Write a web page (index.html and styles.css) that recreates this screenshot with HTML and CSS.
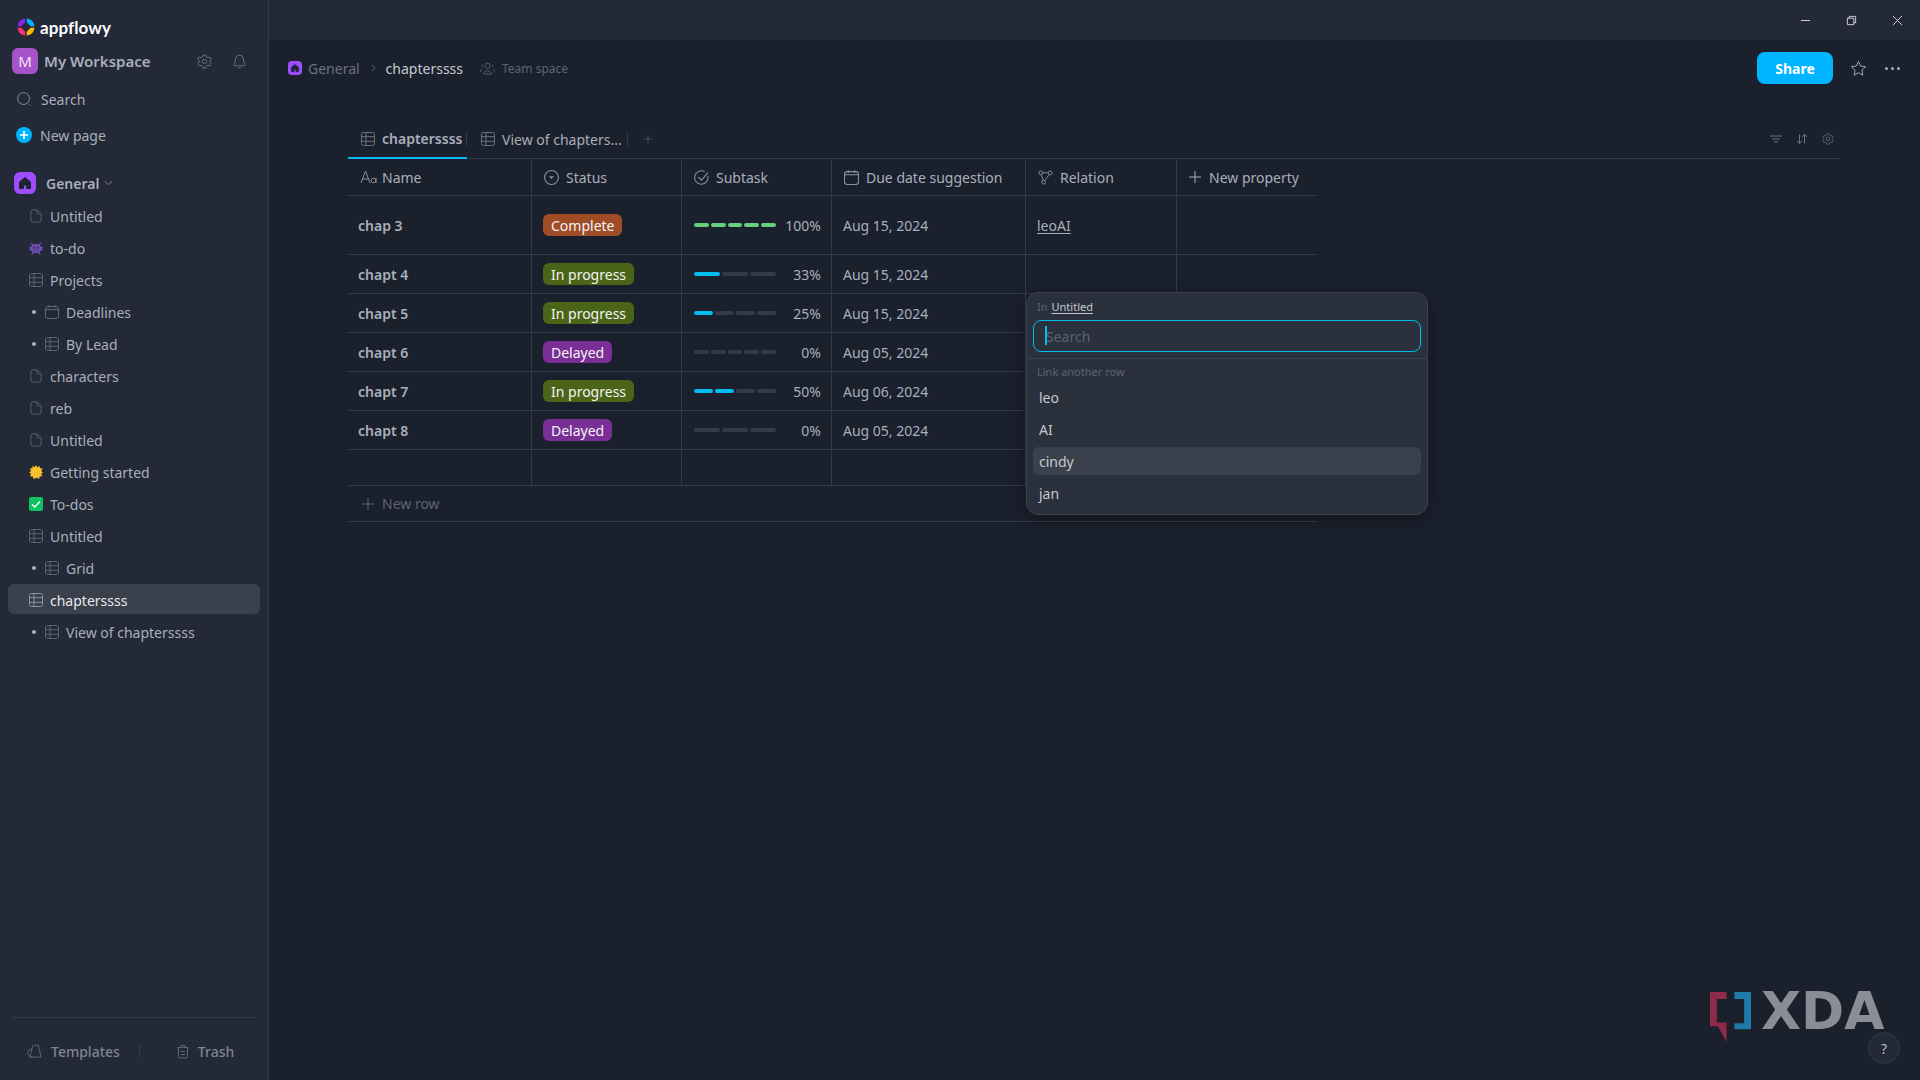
FILE: index.html
```html
<!DOCTYPE html>
<html lang="en">
<head>
<meta charset="utf-8">
<title>AppFlowy</title>
<link rel="stylesheet" href="styles.css">
</head>
<body>
<svg class="defs" width="0" height="0" aria-hidden="true">
  <symbol id="i-doc" viewBox="0 0 14 16"><path d="M3 1h5.2L13 5.8V12.5A2.5 2.5 0 0 1 10.500 15h-7A2.500 2.500 0 0 1 1 12.500v-9A2.500 2.500 0 0 1 3 1zM8.200 1v2.800a2 2 0 0 0 2 2H13" fill="none" stroke="currentColor" stroke-width="1"/></symbol>
  <symbol id="i-grid" viewBox="0 0 14 14"><g fill="none" stroke="currentColor" stroke-width="1"><rect x=".5" y=".5" width="13" height="13" rx="2"/><path d="M.5 4.700h13M.5 9.300h13M5 .5v13"/></g></symbol>
  <symbol id="i-cal" viewBox="0 0 14 14"><g fill="none" stroke="currentColor" stroke-width="1"><rect x=".5" y="1.500" width="13" height="12" rx="2.500"/><path d="M.5 4.500h13M4 .2v2.500M10 .2v2.500"/></g></symbol>
  <symbol id="i-home" viewBox="0 0 22 22"><rect width="22" height="22" rx="6" fill="#9b4dff"/><path d="M11 5.500 5.500 10v6.500h4V13h3v3.500h4V10z" fill="#1f2430" stroke="#1f2430" stroke-linejoin="round"/></symbol>
  <symbol id="i-gear" viewBox="0 0 16 16"><g fill="none" stroke="currentColor" stroke-width="1"><path d="M6.500 1h3l.5 2 1.600.9 2-.6 1.500 2.600-1.500 1.400v1.400l1.500 1.400-1.500 2.600-2-.6-1.600.9-.5 2h-3l-.5-2-1.600-.9-2 .6L.9 10.100l1.500-1.400V7.300L.9 5.900l1.500-2.600 2 .6L6 3z" stroke-linejoin="round"/><circle cx="8" cy="8" r="2.300"/></g></symbol>
  <symbol id="i-plus" viewBox="0 0 12 12"><path d="M6 0v12M0 6h12" fill="none" stroke="currentColor" stroke-width="1"/></symbol>
</svg>

<div class="app">
  <aside class="sidebar">
    <div class="brand">
      <svg class="brand-mark" viewBox="0 0 18 18"><path d="M8.300.6C4 .8.800 4 .6 8.300h3.700l4-4z" fill="#8427e0"/><path d="M9.700.6c4.300.2 7.500 3.400 7.700 7.700h-3.700l-4-4z" fill="#00b5ff"/><path d="M17.400 9.700c-.2 4.300-3.400 7.500-7.700 7.700v-3.700l4-4z" fill="#ffbd00"/><path d="M.6 9.700c.2 4.300 3.400 7.500 7.700 7.700v-3.700l-4-4z" fill="#f7317f"/></svg>
      <span class="brand-name">appflowy</span>
    </div>
    <div class="workspace">
      <span class="avatar">M</span>
      <span class="workspace-name">My Workspace</span>
      <svg class="ws-gear" viewBox="0 0 16 16"><use href="#i-gear"/></svg>
      <svg class="ws-bell" viewBox="0 0 14 16"><path d="M7 1.200A4.300 4.300 0 0 0 2.700 5.500c0 4-1.700 5.500-1.700 6.500 0 .4.300.6.700.6h10.600c.4 0 .7-.2.700-.6 0-1-1.700-2.500-1.700-6.500A4.300 4.300 0 0 0 7 1.200zM5.500 14.300c.8.800 2.200.8 3 0" fill="none" stroke="currentColor"/></svg>
    </div>
    <div class="nav-row nav-search">
      <svg class="nav-icon" viewBox="0 0 16 16"><circle cx="7" cy="7" r="6.300" fill="none" stroke="currentColor"/><path d="m12.800 13 1.400 1.400" stroke="currentColor"/></svg>
      <span>Search</span>
    </div>
    <div class="nav-row nav-new">
      <svg class="nav-plus" viewBox="0 0 16 16"><circle cx="8" cy="8" r="8" fill="#00b5ff"/><path d="M8 4v8M4 8h8" stroke="#fff" stroke-width="1.600"/></svg>
      <span>New page</span>
    </div>
    <div class="space-row">
      <svg class="space-icon"><use href="#i-home"/></svg>
      <span class="space-name">General</span>
      <svg class="chev" viewBox="0 0 10 6"><path d="m1 1 4 4 4-4" fill="none" stroke="currentColor"/></svg>
    </div>
    <ul class="tree">
      <li class="item"><svg class="ico"><use href="#i-doc"/></svg>Untitled</li>
      <li class="item"><svg class="ico" viewBox="0 0 14 14"><path d="M2 1l2 2h6l2-2 .5 1.500L11 4v1h1.500L14 7.500 12.500 10H11v2l1 1.500h-2L9 12H5l-1 1.500H2L3 12v-2H1.500L0 7.500 1.500 5H3V4L1.500 2.500z" fill="#6a4aa8"/><path d="M4.500 6h1.500v1.500H4.500zM8 6h1.500v1.500H8z" fill="#232936"/></svg>to-do</li>
      <li class="item"><svg class="ico"><use href="#i-grid"/></svg>Projects</li>
      <li class="item sub"><span class="dot"></span><svg class="ico"><use href="#i-cal"/></svg>Deadlines</li>
      <li class="item sub"><span class="dot"></span><svg class="ico"><use href="#i-grid"/></svg>By Lead</li>
      <li class="item"><svg class="ico"><use href="#i-doc"/></svg>characters</li>
      <li class="item"><svg class="ico"><use href="#i-doc"/></svg>reb</li>
      <li class="item"><svg class="ico"><use href="#i-doc"/></svg>Untitled</li>
      <li class="item"><svg class="ico" viewBox="0 0 14 14"><path d="M7 0l1.200 2.300L10.700.9l.2 2.400 2.700.3-1.300 2.300L14 7.500l-1.700 1.300.9 2.500-2.600.2-.4 2.500-2.200-1.300L4.500 14l-.6-2.500-2.800-.1.900-2.600L0 7.500l2-1.600L.7 3.500l2.700-.2.300-2.500 2.200 1.400z" fill="#fbc02d"/></svg>Getting started</li>
      <li class="item"><svg class="ico" viewBox="0 0 14 14"><rect width="14" height="14" rx="2" fill="#0bc45f"/><path d="m3 7.500 2.800 2.500L11 4.500" fill="none" stroke="#fff" stroke-width="1.500"/></svg>To-dos</li>
      <li class="item"><svg class="ico"><use href="#i-grid"/></svg>Untitled</li>
      <li class="item sub"><span class="dot"></span><svg class="ico"><use href="#i-grid"/></svg>Grid</li>
      <li class="item active"><svg class="ico"><use href="#i-grid"/></svg>chapterssss</li>
      <li class="item sub"><span class="dot"></span><svg class="ico"><use href="#i-grid"/></svg>View of chapterssss</li>
    </ul>
    <div class="side-foot">
      <div class="foot-btn foot-templates">
        <svg class="foot-ico" viewBox="0 0 16 16"><path d="M5.500 5.500a4 4 0 1 0 1 7.500M6 2l6-1 3 13H3z" fill="none" stroke="currentColor" stroke-linejoin="round"/></svg>
        <span>Templates</span>
      </div>
      <span class="foot-sep"></span>
      <div class="foot-btn foot-trash">
        <svg class="foot-ico trash" viewBox="0 0 12 14"><path d="M.5 3h11M4 3V1h4v2M1.500 3v9a1.500 1.500 0 0 0 1.500 1.500h6a1.500 1.500 0 0 0 1.500-1.500V3M4 7h4M4 10h4" fill="none" stroke="currentColor"/></svg>
        <span>Trash</span>
      </div>
    </div>
  </aside>

  <main class="main">
    <div class="titlebar">
      <svg class="win" viewBox="0 0 12 12"><path d="M1 6h10" stroke="currentColor" fill="none"/></svg>
      <svg class="win" viewBox="0 0 12 12"><path d="M1.500 3.500h7v7h-7zM3.500 3.500v-2h7v7h-2" stroke="currentColor" fill="none"/></svg>
      <svg class="win" viewBox="0 0 12 12"><path d="m1 1 10 10M11 1 1 11" stroke="currentColor" fill="none"/></svg>
    </div>
    <div class="crumbs">
      <svg class="crumb-home" viewBox="0 0 22 22"><use href="#i-home"/></svg>
      <span class="crumb-general">General</span>
      <svg class="crumb-chev" viewBox="0 0 6 10"><path d="m1 1 4 4-4 4" fill="none" stroke="currentColor"/></svg>
      <span class="crumb-page">chapterssss</span>
      <svg class="crumb-team" viewBox="0 0 16 14"><g fill="none" stroke="currentColor"><circle cx="8" cy="4" r="2.800"/><path d="M4 13c0-2.500 1.500-3.500 4-3.500s4 1 4 3.500zM3 2.500C1.800 3 1.800 5 3 5.500M13 2.500c1.200.5 1.200 2.500 0 3M1 11c-1-1.500-.5-2.500 1-3M15 11c1-1.500.5-2.500-1-3"/></g></svg>
      <span class="crumb-team-label">Team space</span>
      <span class="share">Share</span>
      <svg class="star" viewBox="0 0 18 18"><path d="m9 1.500 2.300 4.900 5.200.7-3.800 3.700.9 5.300L9 13.500l-4.600 2.600.9-5.300-3.800-3.700 5.200-.7z" fill="none" stroke="currentColor" stroke-linejoin="round"/></svg>
      <span class="more"><i></i><i></i><i></i></span>
    </div>

    <section class="board">
      <div class="tabs">
        <div class="tab tab-on"><svg class="ico"><use href="#i-grid"/></svg><span>chapterssss</span></div>
        <div class="tab tab-view"><svg class="ico"><use href="#i-grid"/></svg><span>View of chapters...</span></div>
        <svg class="tab-add" viewBox="0 0 12 12"><use href="#i-plus"/></svg>
        <div class="tools">
          <svg class="tool" viewBox="0 0 12 8"><path d="M0 1h12M2 4h8M4 7h4" stroke="currentColor" fill="none"/></svg>
          <svg class="tool" viewBox="0 0 12 12"><path d="M3.500 1.500v9M1 8l2.500 2.700L6 8M8.500 10.500v-9M6 4l2.500-2.700L11 4" stroke="currentColor" fill="none"/></svg>
          <svg class="tool" viewBox="0 0 16 16"><use href="#i-gear"/></svg>
        </div>
      </div>

      <div class="table">
        <div class="row head">
          <div class="hcell"><svg class="hico" viewBox="0 0 16 14"><path d="M.5 13 5 1l4.500 12M2 9h6" fill="none" stroke="currentColor"/><circle cx="13" cy="10.500" r="2.300" fill="none" stroke="currentColor"/><path d="M15.500 8v5" stroke="currentColor"/></svg>Name</div>
          <div class="hcell"><svg class="hico" viewBox="0 0 14 14"><circle cx="7" cy="7" r="6.500" fill="none" stroke="currentColor"/><path d="M4.500 5.800h5L7 8.500z" fill="currentColor"/></svg>Status</div>
          <div class="hcell"><svg class="hico" viewBox="0 0 14 14"><path d="M13 5.500A6.300 6.300 0 1 1 10 1.500M4 6.500l3 3L13 2.500" fill="none" stroke="currentColor"/></svg>Subtask</div>
          <div class="hcell"><svg class="hico" viewBox="0 0 14 14"><use href="#i-cal"/></svg>Due date suggestion</div>
          <div class="hcell"><svg class="hico" viewBox="0 0 16 16"><g fill="none" stroke="currentColor"><circle cx="3" cy="3" r="2"/><circle cx="13" cy="3" r="2"/><circle cx="6" cy="13" r="2"/><path d="M5 3h6M3.500 5l2 6M12 5l-5 6.500"/></g></svg>Relation</div>
          <div class="hcell hcell-new"><svg class="hplus" viewBox="0 0 12 12"><use href="#i-plus"/></svg>New property</div>
        </div>

        <div class="row first">
          <div class="cell name">chap 3</div>
          <div class="cell"><span class="tag tag-complete">Complete</span></div>
          <div class="cell prog"><span class="bar"><i class="seg green"></i><i class="seg green"></i><i class="seg green"></i><i class="seg green"></i><i class="seg green"></i></span><span class="pct">100%</span></div>
          <div class="cell">Aug 15, 2024</div>
          <div class="cell rel"><u>leo</u> <u>AI</u></div>
          <div class="cell last"></div>
        </div>
        <div class="row">
          <div class="cell name">chapt 4</div>
          <div class="cell"><span class="tag tag-progress">In progress</span></div>
          <div class="cell prog"><span class="bar"><i class="seg blue"></i><i class="seg"></i><i class="seg"></i></span><span class="pct">33%</span></div>
          <div class="cell">Aug 15, 2024</div>
          <div class="cell"></div>
          <div class="cell last"></div>
        </div>
        <div class="row">
          <div class="cell name">chapt 5</div>
          <div class="cell"><span class="tag tag-progress">In progress</span></div>
          <div class="cell prog"><span class="bar"><i class="seg blue"></i><i class="seg"></i><i class="seg"></i><i class="seg"></i></span><span class="pct">25%</span></div>
          <div class="cell">Aug 15, 2024</div>
          <div class="cell"></div>
          <div class="cell last"></div>
        </div>
        <div class="row">
          <div class="cell name">chapt 6</div>
          <div class="cell"><span class="tag tag-delayed">Delayed</span></div>
          <div class="cell prog"><span class="bar"><i class="seg"></i><i class="seg"></i><i class="seg"></i><i class="seg"></i><i class="seg"></i></span><span class="pct">0%</span></div>
          <div class="cell">Aug 05, 2024</div>
          <div class="cell"></div>
          <div class="cell last"></div>
        </div>
        <div class="row">
          <div class="cell name">chapt 7</div>
          <div class="cell"><span class="tag tag-progress">In progress</span></div>
          <div class="cell prog"><span class="bar"><i class="seg blue"></i><i class="seg blue"></i><i class="seg"></i><i class="seg"></i></span><span class="pct">50%</span></div>
          <div class="cell">Aug 06, 2024</div>
          <div class="cell"></div>
          <div class="cell last"></div>
        </div>
        <div class="row">
          <div class="cell name">chapt 8</div>
          <div class="cell"><span class="tag tag-delayed">Delayed</span></div>
          <div class="cell prog"><span class="bar"><i class="seg"></i><i class="seg"></i><i class="seg"></i></span><span class="pct">0%</span></div>
          <div class="cell">Aug 05, 2024</div>
          <div class="cell"></div>
          <div class="cell last"></div>
        </div>
        <div class="row empty">
          <div class="cell"></div><div class="cell"></div><div class="cell"></div><div class="cell"></div><div class="cell"></div><div class="cell last"></div>
        </div>
        <div class="new-row"><svg class="hplus" viewBox="0 0 12 12"><use href="#i-plus"/></svg>New row</div>
      </div>
    </section>
  </main>

  <div class="popup">
    <div class="pop-head"><span class="pop-in">In</span> <u>Untitled</u></div>
    <div class="pop-search"><i class="caret"></i><span>Search</span></div>
    <div class="pop-label">Link another row</div>
    <div class="pop-item">leo</div>
    <div class="pop-item">AI</div>
    <div class="pop-item hover">cindy</div>
    <div class="pop-item">jan</div>
  </div>

  <div class="watermark">
    <svg class="wm-mark" viewBox="0 0 42 52"><path d="M0 0h17v7H7v24h10v4l0 16-9-16H0z" fill="#8e2a4a"/><path d="M25 0h17v38H25v-6h10V7H25z" fill="#1f7aa8"/></svg>
    <span class="wm-text">XDA</span>
  </div>
  <div class="help">?</div>
</div>
</body>
</html>
```

FILE: styles.css
```css
* { box-sizing: border-box; }
html, body { margin: 0; height: 100%; }
body {
  background: #1a202c;
  color: #a9afbb;
  font-family: "Noto Sans", "Open Sans", sans-serif;
  font-size: 14px;
  overflow: hidden;
}
.defs { position: absolute; }
svg { display: block; flex: none; overflow: visible; }

.app { position: relative; display: flex; width: 1920px; height: 1080px; }

/* Sidebar */
.sidebar {
  width: 269px;
  flex: none;
  display: flex;
  flex-direction: column;
  background: #232936;
  border-right: 1px solid #343a47;
}
.brand { display: flex; align-items: center; gap: 5px; height: 22px; margin-top: 16px; padding-left: 17px; }
.brand-mark { width: 18px; height: 18px; }
.brand-name { font-family: "Lato", sans-serif; font-weight: 700; font-size: 17px; color: #fff; letter-spacing: .1px; }
.workspace { display: flex; align-items: center; height: 26px; margin-top: 10px; padding-left: 12px; }
.avatar {
  width: 26px; height: 26px; border-radius: 6px; background: #a652c9; color: #f0e6f6;
  display: flex; align-items: center; justify-content: center; font-size: 15px;
}
.workspace-name { margin-left: 6px; font-size: 15px; font-weight: 600; color: #a9afbb; width: 153px; }
.ws-gear { width: 15px; height: 15px; color: #6f7683; }
.ws-bell { width: 13px; height: 15px; margin-left: 21px; color: #6f7683; }
.nav-row { display: flex; align-items: center; height: 30px; color: #a9afbb; }
.nav-search { margin-top: 10px; padding-left: 17px; }
.nav-icon { width: 15px; height: 15px; margin-right: 9px; color: #8a909c; }
.nav-new { margin-top: 6px; padding-left: 16px; }
.nav-plus { width: 16px; height: 16px; margin-right: 8px; }
.space-row { display: flex; align-items: center; height: 24px; margin-top: 21px; padding-left: 14px; }
.space-icon { width: 22px; height: 22px; }
.space-name { margin-left: 10px; font-weight: 600; color: #a9afbb; }
.chev { width: 9px; height: 6px; margin-left: 5px; color: #8a909c; }
.tree { list-style: none; margin: 5px 0 0; padding: 0 8px; }
.item {
  display: flex; align-items: center; height: 30px; margin-bottom: 2px; padding: 2px 0 0 21px;
  border-radius: 6px; color: #a9afbb;
}
.item .ico { margin-right: 7px; }
.ico { width: 14px; height: 14px; color: #5f6673; }
.item .ico[viewBox="0 0 14 16"] { height: 16px; }
.sub { padding-left: 24px; }
.sub .ico { margin-right: 7px; }
.dot { width: 4px; height: 4px; border-radius: 50%; background: #a9afbb; margin-right: 9px; }
.active { background: #3a404c; color: #e6e8ec; padding-left: 21px; height: 30px; }
.active .ico { color: #8a909c; }
.side-foot {
  margin: auto 12px 0; height: 63px; border-top: 1px solid #343a47;
  display: flex; align-items: center; padding-top: 4px; color: #7e8596; font-weight: 500; font-size: 14px;
}
.foot-btn { display: flex; align-items: center; }
.foot-templates { margin-left: 15px; }
.foot-ico { width: 15px; height: 15px; margin-right: 9px; color: #5f6673; }
.foot-ico.trash { width: 12px; }
.foot-sep { width: 1px; height: 14px; background: #343a47; margin: 0 37px 0 19px; }

/* Main */
.main { flex: 1; display: flex; flex-direction: column; min-width: 0; }
.titlebar {
  height: 40px; background: #232936; display: flex; align-items: center; justify-content: flex-end;
  gap: 35px; padding: 0 17px 0 0; color: #d8dbe0;
}
.win { width: 11px; height: 11px; }
.crumbs { display: flex; align-items: center; height: 32px; margin-top: 12px; padding: 0 20px 0 19px; }
.crumb-home { width: 14px; height: 14px; }
.crumb-general { margin-left: 6px; color: #6c7280; }
.crumb-chev { width: 5px; height: 8px; margin-left: 11px; color: #6c7280; }
.crumb-page { margin-left: 10px; color: #c5c9d0; }
.crumb-team { width: 15px; height: 13px; margin-left: 17px; color: #5d6473; }
.crumb-team-label { margin-left: 7px; font-size: 12px; color: #5d6473; }
.share {
  margin-left: auto; width: 76px; height: 32px; border-radius: 8px; background: #00b5ff; color: #fff;
  font-weight: 700; display: flex; align-items: center; justify-content: center;
}
.star { width: 17px; height: 17px; margin-left: 17px; color: #a9afbb; }
.more { display: flex; gap: 3px; margin-left: 18px; }
.more i { width: 3px; height: 3px; border-radius: 50%; background: #a9afbb; }

.board { margin-top: 36px; padding: 0 80px 0 79px; }
.tabs {
  position: relative; display: flex; align-items: center; height: 39px;
  border-bottom: 1px solid #343a46; color: #a9afbb;
}
.tab { display: flex; align-items: center; height: 39px; position: relative; }
.tab .ico { margin-right: 7px; color: #6c7280; }
.tab-on { width: 119px; padding-left: 13px; font-weight: 600; border-bottom: 2px solid #00bcf0; margin-bottom: -1px; }
.tab-on::after, .tab-view::after {
  content: ""; position: absolute; right: 0; top: 12px; height: 14px; width: 1px; background: #343a46;
}
.tab-view { width: 161px; padding-left: 14px; }
.tab-add { width: 8px; height: 8px; margin-left: 16px; color: #5d6473; }
.tools { margin-left: auto; display: flex; align-items: center; gap: 14px; padding-right: 6px; color: #6c7280; }
.tool { width: 12px; height: 12px; }
.tools .tool:first-child { height: 8px; }

.table { width: 969px; }
.row {
  display: grid; grid-template-columns: 184px 150px 150px 194px 151px 140px;
  height: 39px; border-bottom: 1px solid #343a46;
}
.head { height: 37px; }
.first { height: 59px; }
.empty { height: 36px; }
.hcell {
  display: flex; align-items: center; padding-left: 12px; border-right: 1px solid #343a46;
  color: #a9afbb;
}
.hcell-new { border-right: 0; }
.hico { width: 15px; height: 15px; margin-right: 7px; color: #8a909c; }
.hcell:first-child .hico { width: 17px; height: 14px; margin-right: 5px; }
.hplus { width: 12px; height: 12px; margin-right: 8px; }
.cell {
  display: flex; align-items: center; padding: 0 10px 0 11px;
  border-right: 1px solid #343a46; color: #a9afbb;
}
.cell.last { border-right: 0; }
.name { padding-left: 10px; font-weight: 600; color: #a9afbb; }
.tag { height: 22px; padding: 0 8px; border-radius: 6px; color: #f2f3f4; display: flex; align-items: center; }
.tag-complete { background: #a04d27; }
.tag-progress { background: #4a6518; }
.tag-delayed { background: #7a2f96; }
.prog { padding: 0 10px 0 12px; justify-content: space-between; }
.bar { width: 82px; display: flex; gap: 2px; }
.seg { flex: 1; height: 4px; border-radius: 2px; background: #343a46; }
.seg.green { background: #66cf80; }
.seg.blue { background: #00bcf0; }
.pct { color: #a9afbb; }
.rel { white-space: pre; }
.rel u { text-underline-offset: 2px; }
.new-row {
  display: flex; align-items: center; height: 36px; padding-left: 14px; color: #5d6473;
  border-bottom: 1px solid #343a46;
}

/* Popup */
.popup {
  position: absolute; left: 1026px; top: 292px; width: 402px; height: 223px;
  background: #2a303c; border: 1px solid #3a404c; border-radius: 12px;
  box-shadow: 0 4px 16px rgba(0, 0, 0, .3);
}
.pop-head { height: 27px; padding: 0 0 0 10px; display: flex; align-items: center; gap: 4px; font-size: 11px; color: #c5c9d0; }
.pop-in { color: #5d6473; }
.pop-head u { text-underline-offset: 2px; }
.pop-search {
  position: relative; height: 32px; margin: 0 6px; border: 1px solid #00bcf0; border-radius: 8px;
  display: flex; align-items: center; padding-left: 12px; color: #5d6473;
}
.caret { position: absolute; left: 11px; top: 5px; width: 2px; height: 19px; background: #00bcf0; }
.pop-label {
  margin-top: 6px; height: 25px; border-top: 1px solid #3a404c; padding-left: 10px;
  display: flex; align-items: center; font-size: 11px; color: #5d6473;
}
.pop-item {
  height: 28px; margin: 0 6px 4px; padding: 1px 0 0 6px; border-radius: 6px;
  display: flex; align-items: center; color: #c5c9d0;
}
.pop-item.hover { background: #3a404c; }

/* Watermark and help */
.watermark { position: absolute; left: 1710px; top: 992px; display: flex; align-items: flex-start; gap: 10px; }
.wm-mark { width: 41px; height: 51px; }
.wm-text {
  font-family: "DejaVu Sans", sans-serif; font-weight: 700; font-size: 52px; line-height: 38px; color: #8a8d94;
  letter-spacing: 0;
}
.help {
  position: absolute; left: 1868px; top: 1032px; width: 32px; height: 32px; border-radius: 50%;
  background: #232936; border: 1px solid #2f3542; color: #b8bcc4;
  display: flex; align-items: center; justify-content: center; font-size: 14px;
}
```
